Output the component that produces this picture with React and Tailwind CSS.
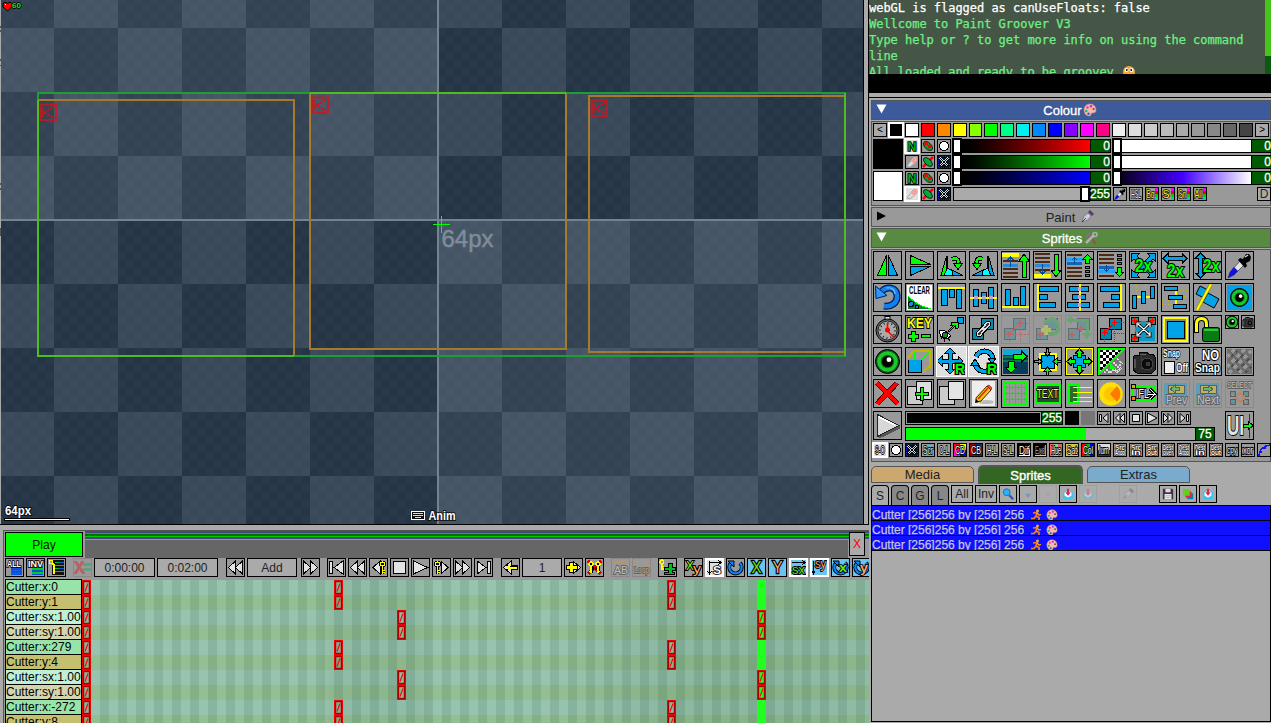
import React from "react";

const BLUE = "#00a2e8";
const GREEN = "#00ff00";
const K = "#000";

/* ---------- shared drawing helpers ---------- */

function T({ x, y, s = 8, w, c = "#fff", o = "#000", sw = 1.6, b = 700, children }) {
  return (
    <text
      x={x}
      y={y}
      fontSize={s}
      fontFamily="Liberation Sans, Arial, sans-serif"
      fontWeight={b}
      fill={c}
      stroke={o}
      strokeWidth={o === "none" ? 0 : sw}
      paintOrder="stroke"
      textLength={w}
      lengthAdjust="spacingAndGlyphs"
    >
      {children}
    </text>
  );
}

function B({ x, y, w, h, c = BLUE, s = K }) {
  return <rect x={x + 0.5} y={y + 0.5} width={w - 1} height={h - 1} fill={c} stroke={s} />;
}

function Arrow({ x, y, r = 0, k = 1, c = GREEN }) {
  return (
    <path
      d="M0 -5L4.5 0H1.8V5H-1.8V0H-4.5Z"
      transform={`translate(${x} ${y}) rotate(${r}) scale(${k})`}
      fill={c}
      stroke={K}
      strokeWidth={1 / k}
    />
  );
}

function Eye({ x = 14.5, y = 14.5, r = 12 }) {
  return (
    <g shapeRendering="auto">
      <circle cx={x} cy={y} r={r} fill="#0c5a14" stroke={K} />
      <circle cx={x} cy={y} r={r * 0.86} fill="#1cc82c" />
      <circle cx={x} cy={y} r={r * 0.56} fill="#0a6a14" />
      <circle cx={x} cy={y} r={r * 0.46} fill={K} />
      <circle cx={x + r * 0.12} cy={y - r * 0.15} r={r * 0.2} fill="#fff" />
    </g>
  );
}

function Lines({ x, w, ys, c = "#4d2b12" }) {
  return ys.map((y) => <rect key={y} x={x} y={y} width={w} height="2" fill={c} />);
}

function Cross({ x, y, c = "#f00" }) {
  return <path d={`M${x - 3} ${y}h6M${x} ${y - 3}v6`} stroke={c} strokeWidth="1.2" />;
}

function Camera({ k = 1 }) {
  return (
    <g transform={`scale(${k})`}>
      <path d="M4 10l2-2h4V5h7l3 2h4l2 3v13l-3 3H8l-4-3z" fill="#2a2a2c" stroke={K} />
      <circle cx="18" cy="17" r="6" fill="#0c0c0c" stroke="#444" />
      <circle cx="19" cy="17" r="2.500" fill="#3a3a3c" />
      <path d="M12.500 9v14" stroke="#8a1a1a" />
      <path d="M6 12v9" stroke="#555" strokeWidth="2" />
      <path d="M11 7h6" stroke="#666" />
    </g>
  );
}

function Dropper({ k = 1 }) {
  return (
    <g transform={`scale(${k})`} shapeRendering="auto">
      <path d="M3 27l2-6L15 10l4 4L9 24z" fill="#e4e4ee" stroke="#555" />
      <path d="M3 27l2-6 4-5 4 4-4 4z" fill="#1010e0" />
      <path d="M13 9l2-2 3 1 3-5h3l2 3-1 4-4 2 1 3-2 2z" fill={K} />
      <path d="M20 6l3-2" stroke="#ccc" strokeWidth="1.500" />
    </g>
  );
}

function Eraser() {
  return (
    <g shapeRendering="auto">
      <path d="M2 11l6-8h4v3l-7 6z" fill="#ddd" stroke="#aaa" />
      <path d="M6 6l3-4h3v3l-3 4z" fill="#f8a0a0" />
    </g>
  );
}

function Palette({ className }) {
  return (
    <svg viewBox="0 0 14 14" className={className}>
      <path d="M7 1C3 1 1 4 1 7s2 6 5 6c2 0 2-1 2-2s1-1 2-1c2 0 3-1 3-3 0-4-3-6-6-6z" fill="#f8b8a4" stroke="#c88" strokeWidth=".6" />
      <circle cx="8" cy="3.300" r="1.200" fill="#93f" />
      <circle cx="4.500" cy="4.500" r="1.200" fill="#f39" />
      <circle cx="3.300" cy="8" r="1.200" fill="#0b8" />
      <circle cx="5.500" cy="10.700" r="1.200" fill="#26c" />
      <circle cx="10.600" cy="6" r="1.100" fill="#556" />
    </svg>
  );
}

/* ---------- large tool icons (29 x 29) ---------- */

const twoX = (x, y) => (
  <T x={x} y={y} s={19} w={17} c={GREEN} sw={2.2}>
    2x
  </T>
);
const links = (
  <g>
    <B x={3} y={13} w={12} h={12} c="#0a86a8" />
    <B x={12} y={3} w={13} h={12} c="#0a86a8" />
  </g>
);

const toolRows = [
  [
    <g>
      <path d="M4.500 24.500L13.500 4.500V24.500Z" fill={GREEN} stroke={K} />
      <path d="M15.500 4.500L24.500 24.500H15.500Z" fill={BLUE} stroke={K} />
    </g>,
    <g>
      <path d="M5.500 4.500L25.500 13.500H5.500Z" fill={GREEN} stroke={K} />
      <path d="M5.500 24.500L25.500 15.500H5.500Z" fill={BLUE} stroke={K} />
    </g>,
    <g>
      <path d="M9.500 5L4 24.500H9.500Z" fill={GREEN} stroke={K} />
      <path d="M10 5v12l15 7.500H7L11 16z" fill="#0ff" stroke={K} />
      <path d="M15 19l11 5.500H16z" fill={BLUE} stroke={K} />
      <path d="M15 8c6-2 7 2 6 5" fill="none" stroke={K} strokeWidth="4.500" />
      <path d="M15 8c6-2 7 2 6 5" fill="none" stroke={GREEN} strokeWidth="2.500" />
      <path d="M16.500 12.500h9L21 18.500z" fill={GREEN} stroke={K} />
    </g>,
    <g>
      <path d="M19.500 5L25 24.500H19.500Z" fill={BLUE} stroke={K} />
      <path d="M19 5v12L4 24.500h18L18 16z" fill="#0ff" stroke={K} />
      <path d="M14 19L3 24.500h10z" fill={BLUE} stroke={K} />
      <path d="M14 8C8 6 7 10 8 13" fill="none" stroke={K} strokeWidth="4.500" />
      <path d="M14 8C8 6 7 10 8 13" fill="none" stroke={GREEN} strokeWidth="2.500" />
      <path d="M3.500 12.500h9L8 18.500z" fill={GREEN} stroke={K} />
    </g>,
    <g>
      <Lines x={2} w={15} ys={[9, 17, 21, 25]} />
      <rect x="1" y="2" width="17" height="4" fill="#ff0" />
      <rect x="2" y="13" width="15" height="3" fill="#2a8ad8" />
      <path d="M9.500 16V6M6.500 9L9.500 6L12.500 9" fill="none" stroke="#024a9a" strokeWidth="1.500" />
      <path d="M23 3l5 7h-3v16h-4V10h-3z" fill={GREEN} stroke={K} />
    </g>,
    <g>
      <Lines x={2} w={15} ys={[2, 6, 10, 18]} />
      <rect x="1" y="23" width="17" height="4" fill="#ff0" />
      <rect x="2" y="13" width="15" height="3" fill="#2a8ad8" />
      <path d="M9.500 13v10M6.500 20l3 3l3-3" fill="none" stroke="#024a9a" strokeWidth="1.500" />
      <path d="M23 26l5-7h-3V3h-4v16h-3z" fill={GREEN} stroke={K} />
    </g>,
    <g>
      <Lines x={2} w={15} ys={[3, 16, 20, 24]} />
      <rect x="1" y="7" width="18" height="3" fill="#2aa0f0" />
      <rect x="2" y="11" width="15" height="3" fill="#1464b8" />
      <path d="M9.500 13V7M7 9L9.500 7L12 9" fill="none" stroke="#024a9a" />
      <Arrow x={22.5} y={8} k={0.95} />
      <path d="M20.500 15.500h4v2h-4zM20.500 19.500h4v2h-4zM20.500 23.500h4v2h-4z" fill="#0c0" stroke={K} />
    </g>,
    <g>
      <Lines x={2} w={15} ys={[3, 7, 11, 24]} />
      <rect x="1" y="19" width="18" height="3" fill="#2aa0f0" />
      <rect x="2" y="15" width="15" height="3" fill="#1464b8" />
      <path d="M9.500 14v6M7 18l2.500 2l2.500-2" fill="none" stroke="#024a9a" />
      <Arrow x={22.5} y={21} r={180} k={0.95} />
      <path d="M20.500 3.500h4v2h-4zM20.500 7.500h4v2h-4zM20.500 11.500h4v2h-4z" fill="#0c0" stroke={K} />
    </g>,
    <g>
      <path d="M6 6L23 23M23 6L6 23" stroke={K} strokeWidth="5" />
      <path d="M2.500 2.500h8l-8 8zM26.500 2.500h-8l8 8zM2.500 26.500h8l-8-8zM26.500 26.500h-8l8-8z" fill={BLUE} stroke={K} />
      <path d="M6 6L23 23M23 6L6 23" stroke={BLUE} strokeWidth="3" />
      {twoX(6, 21)}
    </g>,
    <g>
      <path d="M2 7.500l5-5v3h14v-3l5 5l-5 5v-3H7v3z" fill={BLUE} stroke={K} />
      {twoX(6, 26)}
    </g>,
    <g>
      <path d="M7.500 2l5 5h-3v15h3l-5 5l-5-5h3V7h-3z" fill={BLUE} stroke={K} />
      {twoX(10, 21)}
    </g>,
    <Dropper />,
  ],
  [
    <g shapeRendering="auto">
      <path d="M9 8c5-5 14-4 15 4s-6 12-13 11" fill="none" stroke="#01205a" strokeWidth="7" />
      <path d="M9 8c5-5 14-4 15 4s-6 12-13 11" fill="none" stroke="#1580e8" strokeWidth="4.500" />
      <path d="M2.500 3L3 15.500L14 12.500Z" fill="#2a98ff" stroke="#01205a" />
      <path d="M13 5c5-1 9 1 9 6" fill="none" stroke="#6cc0ff" strokeWidth="1.200" />
    </g>,
    <g>
      <rect x="2" y="2" width="25" height="25" fill="#fff" />
      <path d="M3 13C10 20 15 23 26 26H3z" fill="#087a3a" />
      <path d="M3 13C10 20 15 23 26 26" fill="none" stroke={GREEN} />
      <circle cx="6" cy="21" r="2.500" fill="#1a86d8" stroke={K} /><circle cx="12" cy="24" r="2" fill="#1a86d8" stroke={K} />
      <T x={4} y={11} s={10} w={21} c="#000" o="none">CLEAR</T>
    </g>,
    <g>
      <B x={4} y={6} w={7} h={17} /><B x={12} y={6} w={6} h={9} /><B x={19} y={6} w={6} h={20} />
      <rect x="1" y="4" width="27" height="2" fill="#ff0" />
    </g>,
    <g>
      <B x={4} y={6} w={6} h={18} /><B x={12} y={9} w={6} h={12} /><B x={19} y={4} w={6} h={22} />
      <rect x="1" y="14" width="27" height="2" fill="#ff0" /><path d="M5 14.500h4M13 14.500h4M20 14.500h4" stroke="#c4a0d0" strokeWidth="3" />
    </g>,
    <g>
      <B x={4} y={6} w={6} h={17} /><B x={12} y={14} w={6} h={9} /><B x={19} y={3} w={6} h={20} />
      <rect x="1" y="23" width="27" height="2" fill="#ff0" />
    </g>,
    <g>
      <B x={6} y={3} w={20} h={6} /><B x={6} y={11} w={9} h={6} /><B x={6} y={19} w={17} h={6} />
      <rect x="4" y="1" width="2" height="27" fill="#ff0" />
    </g>,
    <g>
      <B x={4} y={3} w={20} h={6} /><B x={7} y={11} w={14} h={6} /><B x={2} y={19} w={23} h={6} />
      <path d="M14.500 1v27" stroke="#ff0" strokeWidth="2" /><path d="M14.500 4v4M14.500 12v4M14.500 20v4" stroke="#c4a0d0" strokeWidth="3" />
    </g>,
    <g>
      <B x={3} y={3} w={20} h={6} /><B x={14} y={11} w={9} h={6} /><B x={6} y={19} w={17} h={6} />
      <rect x="23" y="1" width="2" height="27" fill="#ff0" />
    </g>,
    <g>
      <path d="M7.500 1v10M16.500 1v6M20.500 18v9" stroke="#c8b800" strokeDasharray="1 2" />
      <rect x="4" y="13" width="18" height="2" fill="#ff0" />
      <B x={3} y={12} w={5} h={14} /><B x={12} y={8} w={5} h={13} /><B x={21} y={3} w={5} h={13} />
    </g>,
    <g>
      <path d="M16 7.500h11M1 17.500h8M1 21.500h10M20 13.500h8" stroke="#c8b800" strokeDasharray="1 2" />
      <rect x="14" y="4" width="2" height="18" fill="#ff0" />
      <B x={3} y={3} w={14} h={5} /><B x={7} y={12} w={15} h={5} /><B x={12} y={21} w={14} h={5} />
    </g>,
    <g shapeRendering="auto">
      <path d="M7 3l8 4-4 8-8-4zM15 10l11 6-5 9-11-6z" fill={BLUE} stroke={K} />
      <path d="M4 27L18 1" stroke="#a09000" strokeWidth="3.500" />
      <path d="M4 27L18 1" stroke="#ff0" strokeWidth="2" />
    </g>,
    <g>
      <rect x="2" y="2" width="25" height="25" fill={BLUE} />
      <Eye r={9} />
    </g>,
  ],
  [
    <g shapeRendering="auto">
      <rect x="12" y="1.500" width="5" height="4" fill="#ddd" stroke={K} />
      <circle cx="14.500" cy="15.500" r="11.500" fill="#666" stroke={K} />
      <circle cx="14.500" cy="15.500" r="9.500" fill="#aaa" stroke="#222" />
      <circle cx="14.500" cy="15.500" r="7.500" fill="none" stroke="#222" strokeDasharray="1 2.900" strokeWidth="2" />
      <path d="M14.500 8v8l7 7" fill="none" stroke="#f00" strokeWidth="1.600" />
      <circle cx="14.500" cy="15" r="2.500" fill="#f00" />
    </g>,
    <g>
      <T x={2} y={13} s={15.5} w={25} c="#ff0" sw={2}>KEY</T>
      <path d="M3.500 19.500h3v-3h4v3h3v4h-3v3h-4v-3h-3zM16.500 19.500h9v3h-9z" fill={GREEN} stroke={K} />
    </g>,
    <g>
      <B x={20} y={2} w={7} h={7} />
      <path d="M11 16l6-6h-3l1-3h6v6l-3 1v-3l-6 6z" fill={GREEN} stroke={K} />
      <path d="M2 16c2 9 7 9 12 5-2-3-7-7-12-5z" fill="#fff" stroke={K} /><circle cx="8" cy="20" r="2.800" fill="#1a8a2a" stroke={K} />
      <path d="M2 17l3 7M7 24v3M11 23l2 3" stroke={K} />
    </g>,
    <g>
      {links}
      <path d="M10 19l9-10" stroke={K} strokeWidth="6.500" strokeLinecap="round" />
      <path d="M10 19l9-10" stroke="#ddd" strokeWidth="4.500" strokeLinecap="round" />
      <path d="M10 19l3-3.500M16 12.500l3-3.500" stroke="#333" strokeWidth="1.800" strokeLinecap="round" />
    </g>,
    <g opacity=".3">
      {links}
      <path d="M8 27V19L19 8H28M19 8V27M8 19H28" fill="none" stroke="#f00" strokeDasharray="2 1" />
      <Cross x={8} y={19} /><Cross x={19} y={8} />
    </g>,
    <g opacity=".3">
      {links}
      <path d="M12 9c2-7 13-6 13 2M25 12c1 8-10 9-12 3" fill="none" stroke="#0b2" strokeWidth="4" />
      <path d="M8 15h10M13 10v10" stroke="#ff0" strokeWidth="4" />
      <Cross x={7} y={20} />
    </g>,
    <g opacity=".3">
      {links}
      <path d="M4 5h18v16M7 2L4 5l3 3M19 18l3 4 3-4" fill="none" stroke="#0b2" strokeWidth="3" />
      <Cross x={7} y={20} /><Cross x={16} y={14} />
    </g>,
    <g>
      {links}
      <path d="M17.500 8V28M7.500 18H28M18 7.500h10M7.500 18V28" fill="none" stroke="#f00" strokeDasharray="1 1" />
      <path d="M7 18L18 8" stroke="#f00" />
      <Cross x={7.5} y={17.5} /><Cross x={17.5} y={7.5} />
    </g>,
    <g shapeRendering="auto">
      <rect x="6" y="6" width="20" height="20" fill="#0a9ac8" />
      <B x={2} y={2} w={8} h={8} c="#0a9a78" /><B x={19} y={2} w={8} h={8} c="#0a9a78" /><B x={2} y={19} w={8} h={8} c="#0a9a78" />
      <path d="M9 9l12 11M20 9L9 20M8 12V8h4M17 8h4v4M8 17v4h4M21 17v4h-4" fill="none" stroke={K} strokeWidth="3" />
      <path d="M9 9l12 11M20 9L9 20M8 12V8h4M17 8h4v4M8 17v4h4M21 17v4h-4" fill="none" stroke="#fff" strokeWidth="1.200" />
      <Cross x={5.5} y={5.5} /><Cross x={23.5} y={5.5} /><Cross x={5.5} y={23.5} />
    </g>,
    <g>
      <rect x="3" y="3" width="23" height="23" fill="#888" stroke="#ff0" strokeWidth="2" />
      <B x={6} y={6} w={18} h={18} />
    </g>,
    <g shapeRendering="auto">
      <path d="M3.500 18V9q0-5.500 5-5.500t5 5.500v4" fill="none" stroke={K} strokeWidth="5" />
      <path d="M3.500 17V9q0-5.500 5-5.500t5 5.500v4" fill="none" stroke="#ff0" strokeWidth="3" />
      <rect x="9.500" y="12.500" width="17" height="14" rx="2" fill="#0a7a14" stroke={K} />
      <path d="M11 15h14" stroke="#2cc838" strokeWidth="2" />
    </g>,
  ],
  [
    <Eye />,
    <g>
      <path d="M3 11l6-7h16v15l-7 6" fill="none" stroke="#c8b400" strokeWidth="2" />
      <path d="M9 4v12h16M3 26l6-10" fill="none" stroke={GREEN} />
      <B x={3} y={12} w={14} h={14} />
      <path d="M3 12h14l7-7" fill="none" stroke={GREEN} />
    </g>,
    <g>
      <path d="M13 1l5 5h-3v6h6V9l5 5-5 5v-3h-6v6h3l-5 5-5-5h3v-6H5v3l-5-5 5-5v3h6V6H8z" fill={BLUE} stroke={K} />
      <T x={18} y={27} s={15} w={10} c={GREEN} sw={3}>R</T>
    </g>,
    <g>
      <path d="M7 10c3-8 15-8 17 2M23 19c-3 8-14 7-17-2" fill="none" stroke={K} strokeWidth="5.500" />
      <path d="M7 10c3-8 15-8 17 2M23 19c-3 8-14 7-17-2" fill="none" stroke={BLUE} strokeWidth="3.500" />
      <path d="M19 11h8l-4 6zM2 18h8l-4-6z" fill={BLUE} stroke={K} />
      <T x={18} y={27} s={15} w={10} c={GREEN} sw={3}>R</T>
    </g>,
    <g>
      <rect x="2" y="2" width="25" height="25" fill="#063c58" />
      <rect x="2" y="2" width="25" height="6" fill="#12a8d8" />
      <path d="M2 10h25M2 14h25" stroke="#0a7a4a" strokeWidth="2" />
      <path d="M12 7h8V3.500l6 6-6 6V12h-8zM7 14h6v6h3l-6 6-6-6h3z" fill={GREEN} stroke={K} />
    </g>,
    <g>
      <rect x="6.500" y="6.500" width="16" height="16" fill="none" stroke="#ff0" strokeWidth="2" />
      <B x={8} y={8} w={14} h={14} />
      <Arrow x={14.5} y={5} r={180} k={0.8} /><Arrow x={14.5} y={24} k={0.8} />
      <Arrow x={5} y={14.5} r={90} k={0.8} /><Arrow x={24} y={14.5} r={270} k={0.8} />
    </g>,
    <g>
      <rect x="1" y="1" width="27" height="27" fill="none" stroke="#ff0" strokeWidth="2" />
      <B x={8} y={8} w={13} h={13} />
      <Arrow x={14.5} y={6} k={0.85} /><Arrow x={14.5} y={23} r={180} k={0.85} />
      <Arrow x={6} y={14.5} r={270} k={0.85} /><Arrow x={23} y={14.5} r={90} k={0.85} />
    </g>,
    <g>
      <rect x="1" y="1" width="27" height="27" fill="#555" />
      <path d="M1 28L28 1v27z" fill="#777" />
      <path d="M2 2h24L2 26z" fill="#fff" />
      <path d="M4.500 2v22M10.500 2v16M16.500 2v10M22.500 2v4" stroke={K} strokeWidth="3" strokeDasharray="3 3" />
      <path d="M7.500 5v16M13.500 5v10M19.500 5v4" stroke={K} strokeWidth="3" strokeDasharray="3 3" />
      <path d="M1 28L28 1M2 28V2H28" fill="none" stroke={GREEN} strokeWidth="2.500" />
      <path d="M7 26l3-3 3 3 4-4 3 3 4-4M14 19l3-3 4 4 4-4M20 12l4 3" fill="none" stroke="#ddd" strokeWidth="1.500" strokeDasharray="2 1" />
      <path d="M13 16l7 6h-7z" fill={GREEN} />
    </g>,
    <Camera />,
    <g>
      <T x={2} y={10} s={10} w={17}>Snap</T>
      <rect x="3.500" y="14.500" width="10" height="12" fill="#eee" stroke={K} />
      <T x={15} y={25} s={12} w={12}>Off</T>
    </g>,
    <g>
      <T x={9} y={13} s={15} w={17} sw={2.2}>NO</T>
      <T x={2} y={25} s={13} w={25} sw={2.2}>Snap</T>
    </g>,
    <g>
      <rect x="2" y="2" width="25" height="25" fill="#6e6e6e" />
      <path d="M2 10L10 2M2 20L20 2M4 26L26 4M14 26L26 14" stroke="#969696" strokeWidth="3" strokeDasharray="4 3" />
      <path d="M6 10L12 4M6 20L20 6M12 24L26 10M20 26l6-6" stroke="#4e4e4e" strokeWidth="2" strokeDasharray="3 4" />
    </g>,
  ],
  [
    <g>
      <path d="M4 4l21 21M24 4L4 25" stroke="#500" strokeWidth="5.500" />
      <path d="M4 4l21 21M24 4L4 25" stroke="#f00" strokeWidth="3.800" />
    </g>,
    <g>
      <rect x="2.500" y="7.500" width="15" height="18" fill="#ccc" stroke={K} />
      <rect x="11.500" y="2.500" width="15" height="18" fill="#ddd" stroke={K} />
      <path d="M15.500 8.500h3v5h5v3h-5v5h-3v-5h-5v-3h5z" fill={GREEN} stroke={K} />
    </g>,
    <g>
      <rect x="2.500" y="7.500" width="15" height="18" fill="#ccc" stroke={K} />
      <rect x="11.500" y="2.500" width="15" height="18" fill="#e4e4e4" stroke={K} />
    </g>,
    <g shapeRendering="auto">
      <rect x="3" y="2" width="23" height="25" fill="#eee" />
      <ellipse cx="17" cy="23" rx="8" ry="2" fill="#bbb" />
      <path d="M7 19L18 7l4 4L12 22l-5 1z" fill="#f8c800" stroke="#420" />
      <path d="M9 20L19 9" stroke="#d22" strokeWidth="1.600" />
      <path d="M18 7l2-1 3 3-1 2z" fill="#f44" stroke="#420" strokeWidth=".6" /><path d="M6 24l1-4 3 3z" fill={K} />
    </g>,
    <g>
      <rect x="3.500" y="3.500" width="22" height="22" fill="none" stroke={GREEN} />
      <g fill="none" stroke="#00d800" strokeOpacity=".65">
        <path d="M8.500 4v21M14.500 4v21M20.500 4v21M4 8.500h21M4 14.500h21M4 20.500h21" />
        <path d="M5.500 4v21M11.500 4v21M17.500 4v21M23.500 4v21" strokeDasharray="1 2" />
      </g>
    </g>,
    <g>
      <rect x="2.500" y="5.500" width="24" height="18" fill="#2a4a2a" stroke={GREEN} strokeWidth="2" />
      <T x={3.5} y={19} s={12.5} w={22} c="#ff0" sw={1.6} b={400}>TEXT</T>
    </g>,
    <g>
      <rect x="4" y="6" width="9" height="18" fill="#2a6a2a" stroke={GREEN} strokeWidth="2.500" />
      <path d="M8 8.500h19M8 13.500h19M8 18.500h19M8 22.500h19" stroke="#ff0" />
    </g>,
    <g shapeRendering="auto">
      <circle cx="14" cy="15" r="11.800" fill="#ffe000" />
      <circle cx="14" cy="15" r="7" fill="#ffc400" />
      <path d="M13 15l7-8q7 8 0 16z" fill="#ff7a00" />
    </g>,
    <g>
      <path d="M4 8h21v13H4z" fill="none" stroke={GREEN} strokeWidth="2" />
      <B x={2} y={5} w={5} h={5} c="#c8b400" /><B x={2} y={17} w={5} h={5} c="#f70" />
      <T x={7} y={19} s={13} w={13} b={400} sw={2}>IFL</T>
      <path d="M21 10l5 5-5 5M19 15h8" fill="none" stroke={K} strokeWidth="3" /><path d="M21 10l5 5-5 5M19 15h8" fill="none" stroke="#fff" />
    </g>,
    <g opacity=".38">
      <rect x="3" y="4" width="23" height="21" fill={BLUE} />
      <rect x="7" y="6" width="16" height="8" fill="#fd0" stroke={K} />
      <Arrow x={14} y={10} r={270} k={0.9} />
      <T x={5} y={25} s={12} w={21} b={400} sw={2}>Prev</T>
    </g>,
    <g opacity=".38">
      <rect x="3" y="4" width="23" height="21" fill={BLUE} />
      <rect x="7" y="6" width="16" height="8" fill="#fd0" stroke={K} />
      <Arrow x={15} y={10} r={90} k={0.9} />
      <T x={4} y={25} s={12} w={22} b={400} sw={2}>Next</T>
    </g>,
    <g opacity=".38">
      <T x={2} y={9} s={9.5} w={25} b={400} sw={2}>SELECT</T>
      <B x={5} y={12} w={6} h={6} c="#0a8a98" /><B x={18} y={12} w={6} h={6} c="#0a8a98" />
      <B x={5} y={20} w={6} h={6} c="#0a8a98" /><B x={18} y={20} w={6} h={6} c="#0a8a98" />
      <path d="M11 19l4-5 5 5-5 4zM7 15l2 2M20 22l2 2" fill="none" stroke="#f60" strokeWidth="2" />
    </g>,
  ],
];

function Tool({ on, off, children }) {
  const box = on ? "h-[31px] w-[31px] -m-px bg-white p-px" : off ? "h-[29px] w-[29px] border border-[#8a8a8a]" : "h-[29px] w-[29px] border border-black";
  return (
    <div className={`shrink-0 ${box}`}>
      <svg viewBox="1 1 27 27" shapeRendering="crispEdges" className={on ? "block h-[29px] w-[29px] bg-[#e0e0e0] p-px" : "block h-[27px] w-[27px]"}>
        {children}
      </svg>
    </div>
  );
}

function Mini({ on, bg = "bg-[#999]", children }) {
  return (
    <div className={`h-[14px] w-[14px] shrink-0 ${on ? "bg-[#e0e0e0] outline-2 -outline-offset-1 outline-white" : bg + " border border-black"}`}>
      <svg viewBox="1 1 12 12" shapeRendering="crispEdges" className={on ? "block h-[14px] w-[14px] p-px" : "block h-3 w-3"}>
        {children}
      </svg>
    </div>
  );
}

/* ---------- transport shapes (19 x 19) ---------- */

const F = { fill: "#e4e4e4", stroke: K, strokeWidth: 1 };
const shapes = {
  rew: <path d="M9.500 3v13l-7-6.500zM16.500 3v13l-7-6.500z" {...F} />,
  ff: <path d="M2.500 3v13l7-6.500zM9.500 3v13l7-6.500z" {...F} />,
  start: <g><path d="M2.500 3.500h3v12h-3z" {...F} /><path d="M16 3v13l-9-6.500z" {...F} /></g>,
  end: <g><path d="M13.500 3.500h3v12h-3z" {...F} /><path d="M3 3v13l9-6.500z" {...F} /></g>,
  stop: <path d="M3.500 3.500h12v12h-12z" {...F} />,
  play: <path d="M2.500 3v13l14-6.500z" {...F} />,
  keyL: <g><path d="M11 3v13L4 9.500z" {...F} /><path d="M13.500 7v9M14 13.500h2" stroke={K} strokeWidth="3" /><circle cx="13.500" cy="6" r="2" fill="none" stroke={K} strokeWidth="3" /><circle cx="13.500" cy="6" r="2" fill="none" stroke="#ff0" strokeWidth="1.200" /><path d="M13.500 8v8M13.500 12.500h2M13.500 14.500h2" stroke="#ff0" /></g>,
  keyR: <g><path d="M9 3v13l7-6.500z" {...F} /><path d="M5.500 7v9M6 13.500h2" stroke={K} strokeWidth="3" /><circle cx="5.500" cy="6" r="2" fill="none" stroke={K} strokeWidth="3" /><circle cx="5.500" cy="6" r="2" fill="none" stroke="#ff0" strokeWidth="1.200" /><path d="M5.500 8v8M5.500 12.500h2M5.500 14.500h2" stroke="#ff0" /></g>,
  prev: <g><path d="M10 3v13L2.500 9.500z" {...F} /><path d="M6 9.500h11" stroke={K} strokeWidth="4.500" /><path d="M6 9.500h10M9.500 6.500l-3 3 3 3" fill="none" stroke="#ff0" strokeWidth="2" /></g>,
  next: <g><path d="M9 3v13l7.500-6.500z" {...F} /><path d="M2 9.500h12M7.500 4v11" stroke={K} strokeWidth="5" /><path d="M3 9.500h10M7.500 5v9" stroke="#ff0" strokeWidth="3" /></g>,
  keyDel: <g><path d="M3 3l13 13M16 3L3 16" stroke="#e00000" strokeWidth="3.500" /><path d="M6 5v10M13 5v10M6 10h3M13 10h-3" stroke={K} strokeWidth="3" /><circle cx="6" cy="6" r="2" fill="none" stroke="#ff0" strokeWidth="1.500" /><circle cx="13" cy="6" r="2" fill="none" stroke="#ff0" strokeWidth="1.500" /><path d="M6 8v7M13 8v7M4 13.500h2M13 13.500h2" stroke="#ff0" strokeWidth="1.500" /></g>,
  all: <g><rect x="6" y="8" width="11" height="9" fill="#0a50d8" /><path d="M6 9h11M6 12h11M6 15h11" stroke="#0f6ef8" strokeDasharray="1 1" /><T x={2} y={8.5} s={8.5} w={14}>ALL</T></g>,
  inv: <g><rect x="6" y="8" width="11" height="9" fill="#0a50d8" /><path d="M6 11h11M6 15h11" stroke="#0c2" strokeWidth="2" /><T x={2} y={8.5} s={8.5} w={15}>INV</T></g>,
  keys: <g><rect x="5" y="2" width="12" height="15" fill="#111" /><path d="M8 4.500h9M8 7.500h9M8 10.500h9M8 13.500h9" stroke="#0b4" /><path d="M12 4.500h5M12 10.500h5" stroke="#06c" /><circle cx="4" cy="4" r="2" fill="none" stroke="#ff0" /><path d="M5 5l2 2v9" fill="none" stroke="#ff0" strokeWidth="1.500" /></g>,
  del: <g opacity=".35"><path d="M2 3l9 13M10 3L2 16" stroke="#e00" strokeWidth="3" /><path d="M10 6.500h8M10 11.500h8" stroke="#0a5" strokeWidth="3" /></g>,
  ab: <g opacity=".35"><path d="M2 4.500h15M2.500 2v5M16.500 2v5" stroke="#f80" strokeWidth="1.500" /><T x={3} y={16} s={11} w={14} b={400} sw={2}>AB</T></g>,
  loop: <g opacity=".35"><path d="M2 8V3.500h14M14 1l3 2.500-3 2.500" fill="none" stroke="#f80" strokeWidth="1.500" strokeDasharray="2 1" /><T x={2} y={15} s={9} w={15} c="#fb5" b={400} sw={2}>Loop</T></g>,
  keyAdd: <g><path d="M6.500 9.500h4v-4h4v4h3v3h-3v2h2v2h-10v-2h4v-2h-4z" fill="#0b2" stroke={K} /><circle cx="4" cy="4" r="2" fill="none" stroke="#ff0" strokeWidth="1.200" /><path d="M4 6v6M4 8.500h2M4 11h2" stroke="#ff0" strokeWidth="1.200" /></g>,
  xy: <g><T x={2} y={12} s={13} w={8} c="#8f0" b={400} sw={2}>X</T><T x={9} y={14.5} s={13} w={8} c="#fca46a" b={400} sw={2}>y</T></g>,
  s: <g><path d="M4.500 3v13M4.500 4.500h11M13 2l3 2.500-3 2.500M2.500 13l2 3 2-3" fill="none" stroke={K} /><T x={8} y={16} s={11} w={8} c="#fff">S</T></g>,
  rot: <g shapeRendering="auto"><path d="M5 5a6.200 6.200 0 1 0 9 0" fill="none" stroke={K} strokeWidth="4" /><path d="M5 5a6.200 6.200 0 1 0 9 0" fill="none" stroke="#0a84ff" strokeWidth="2.200" /><path d="M2 3h6v6z" fill="#0a84ff" stroke={K} /></g>,
  x: <T x={4.5} y={15} s={16} w={10} c="#6e0" b={400} sw={2.4}>X</T>,
  y: <T x={4.5} y={15} s={16} w={10} c="#fca46a" b={400} sw={2.4}>Y</T>,
  sx: <g><path d="M3 4.500h12M13 2l3 2.500-3 2.500" fill="none" stroke={K} /><T x={3} y={16} s={12} w={13} c="#6e0" b={400} sw={1.8}>sx</T></g>,
  sy: <g><path d="M3.500 3v13M2 13l1.500 3L5 13" fill="none" stroke={K} /><T x={5} y={10} s={12} w={11} c="#fca46a" b={400} sw={1.8}>sy</T></g>,
};
shapes.rx = <g>{shapes.rot}<T x={8} y={14} s={12} w={8} c="#6e0">x</T></g>;
shapes.ry = <g>{shapes.rot}<T x={8} y={14} s={12} w={8} c="#fca46a">y</T></g>;

function TBtn({ k, on, blue, off, gap = "" }) {
  const bg = blue ? "bg-[#6cc4ee]" : on ? "bg-[#e0e0e0]" : "bg-[#999]";
  const bd = on ? "border-2 border-white" : off ? "border border-[#888]" : "border border-black";
  return (
    <div className={`h-[19px] w-[19px] shrink-0 ${bg} ${bd} ${gap}`}>
      <svg viewBox={on ? "2 2 15 15" : "1 1 17 17"} className={on ? "block h-[15px] w-[15px]" : "block h-[17px] w-[17px]"} shapeRendering="crispEdges">
        {shapes[k]}
      </svg>
    </div>
  );
}

/* ---------- canvas ---------- */

function KeyMark({ x, y }) {
  return (
    <g transform={`translate(${x} ${y})`} fill="none" stroke="#d81018" strokeOpacity=".75">
      <rect x="1" y="1" width="15.500" height="15.500" strokeWidth="2" />
      <path d="M3 3v11" strokeWidth="2.500" />
      <path d="M15 2.500L5 9l10 5.500" strokeWidth="1.300" stroke="#e00c14" strokeOpacity="1" />
    </g>
  );
}

function Stage() {
  return (
    <svg width="863" height="524" viewBox="0 0 863 524" className="block" fontFamily="Liberation Sans, Arial, sans-serif">
      <defs>
        <pattern id="small" width="16" height="16" x="6" y="12" patternUnits="userSpaceOnUse">
          <rect width="16" height="16" fill="#253546" />
          <path d="M0 0h8v8H0zM8 8h8v8H8z" fill="#28394a" />
        </pattern>
        <pattern id="big" width="128" height="128" x="54" y="28" patternUnits="userSpaceOnUse">
          <path d="M64 0h64v64H64zM0 64h64v64H0z" fill="#f0f8ff" fillOpacity=".1" />
        </pattern>
      </defs>
      <rect width="863" height="524" fill="url(#small)" />
      <rect width="863" height="524" fill="url(#big)" />
      <path d="M0 0h438v220H0zM438 220h425v304H438z" fill="#f0f8ff" fillOpacity=".075" />
      <rect width="1" height="524" fill="#aaa" />
      <path d="M0 26h1v2H0zM0 30h1v2H0zM0 59h1v2H0zM0 65h1v1H0zM0 183h1v2H0zM0 188h1v2H0zM0 228h1v8H0z" fill="#555" />
      <path d="M438 0v524M1 220h862" stroke="#738392" strokeWidth="2" />
      <g fill="none" strokeWidth="2">
        <path d="M38 93H845V356H38Z" stroke="#1b9e32" />
        <path d="M38 100H294V356M310 93V349H566V93M845 96H589V352H845" stroke="#a8782c" />
        <path d="M38 100V356H294M310 93H566M845 93V356" stroke="#4fbe1a" />
      </g>
      <KeyMark x={39.5} y={103.5} />
      <KeyMark x={311.5} y={96.5} />
      <KeyMark x={590.5} y={99.5} />
      <path d="M433 224.500h17M441.500 216v17" stroke={GREEN} />
      <text x="441.500" y="247" fontSize="24" fill="#7f8c99" stroke="#7f8c99" strokeWidth=".5">64px</text>
      <path d="M4 2.500h2l1.500 1 1.500-1h2l1 1v3L7.500 11 3 7V4z" fill="#f00" stroke={K} />
      <path d="M5 4h1v1H5z" fill="#fff" />
      <T x={12} y={8} s={8} w={9} c={GREEN}>60</T>
      <g fontSize="12" fontWeight="700" fill="#fff" stroke={K} strokeWidth="2" strokeOpacity=".7" paintOrder="stroke">
        <text x="5" y="515" textLength="26" lengthAdjust="spacingAndGlyphs">64px</text>
        <text x="428.500" y="520" textLength="27" lengthAdjust="spacingAndGlyphs">Anim</text>
      </g>
      <rect x="4.500" y="518.500" width="65" height="2" fill="#fff" stroke={K} strokeWidth="1" />
      <rect x="411.500" y="511.500" width="13" height="8" fill="#111" stroke="#fff" />
      <path d="M413 513.500h10M413 515.500h10M415 517.500h6" stroke="#ddd" />
    </svg>
  );
}

/* ---------- timeline ---------- */

const tracks = [
  ["Cutter:x:0", "bg-[#98e4a8]"],
  ["Cutter:y:1", "bg-[#c4c070]"],
  ["Cutter:sx:1.00", "bg-[#c0f0d4]"],
  ["Cutter:sy:1.00", "bg-[#d2d6b0]"],
  ["Cutter:x:279", "bg-[#98e4a8]"],
  ["Cutter:y:4", "bg-[#c4c070]"],
  ["Cutter:sx:1.00", "bg-[#c0f0d4]"],
  ["Cutter:sy:1.00", "bg-[#d2d6b0]"],
  ["Cutter:x:-272", "bg-[#98e4a8]"],
  ["Cutter:y:8", "bg-[#c4c070]"],
];

function KeyFrame({ frame }) {
  return (
    <svg width="9" height="15" viewBox="0 0 9 15" className="absolute top-0" style={{ left: frame * 9 }}>
      <rect x=".5" y=".5" width="8" height="14" fill="none" stroke="#f00000" />
      <rect x="1.600" y="1.600" width="5.800" height="11.800" fill="none" stroke="#a80000" strokeWidth="1.200" />
      <path d="M3 11.500L6 3.500" stroke="#f00" strokeWidth="1.100" />
    </svg>
  );
}

function Field({ w, children }) {
  return <div className={`flex h-[19px] shrink-0 items-center justify-center border border-black bg-[#aaa] text-[#222] ${w}`}>{children}</div>;
}

function Timeline() {
  return (
    <div className="ml-[3px] mt-[5px] flex h-[193px] w-[866px] flex-col border-l border-t border-[#555] bg-[#999] pl-px pt-px text-[12px] leading-none">
      <div className="flex h-[26px]">
        <div className="flex h-[25px] w-[78px] items-center justify-center border border-black bg-[#00ff00] text-[#111]">Play</div>
        <div className="relative -mt-px ml-[2px] flex w-[784px] flex-col">
          <div className="h-[8px] border-y-2 border-[#444a80] bg-[#007a00]">
            <div className="h-1 border-y border-[#00c800] bg-[#007000]" />
          </div>
          <div className="mt-px h-[18px] w-[763px] bg-[#666]" />
          <div className="absolute left-[764px] top-px flex h-[24px] w-[16px] items-center justify-center border border-black bg-[#aaa] text-[#f00]">X</div>
        </div>
      </div>
      <div className="flex h-[22px] gap-[2px] overflow-hidden">
        <TBtn k="all" /><TBtn k="inv" /><TBtn k="keys" />
        <TBtn k="del" off gap="ml-[5px]" />
        <Field w="w-[61px]">0:00:00</Field>
        <Field w="w-[61px]">0:02:00</Field>
        <TBtn k="rew" gap="ml-[6px]" />
        <Field w="w-[50px]">Add</Field>
        <TBtn k="ff" gap="ml-[2px]" />
        <TBtn k="start" gap="ml-[5px]" /><TBtn k="rew" /><TBtn k="keyL" /><TBtn k="stop" /><TBtn k="play" /><TBtn k="keyR" /><TBtn k="ff" /><TBtn k="end" />
        <TBtn k="prev" gap="ml-[6px]" />
        <Field w="w-[40px]">1</Field>
        <TBtn k="next" /><TBtn k="keyDel" />
        <TBtn k="ab" off gap="ml-[5px]" /><TBtn k="loop" off />
        <TBtn k="keyAdd" gap="ml-[5px]" />
        <TBtn k="xy" gap="ml-[5px]" /><TBtn k="s" on /><TBtn k="rot" />
        <TBtn k="x" blue /><TBtn k="y" blue /><TBtn k="sx" blue on /><TBtn k="sy" blue on /><TBtn k="rx" blue /><TBtn k="ry" blue />
      </div>
      <div className="relative -mt-px flex min-h-0 flex-1 overflow-hidden">
        <div className="w-[77px] shrink-0 border-t border-black">
          {tracks.map(([label, bg], i) => (
            <div key={i} className={`h-[15px] overflow-hidden whitespace-nowrap border-x border-b border-black leading-[14px] text-black ${bg}`}>{label}</div>
          ))}
        </div>
        <div className="mt-px flex-1">
          {tracks.map((_, i) => (
            <div key={i} className={`relative h-[15px] ${i % 2 ? "bg-[#97c196]" : "bg-[#9bc7b1]"}`}>
              <div className="h-full bg-[linear-gradient(90deg,transparent_0_30%,rgba(0,40,20,.05)_32%_43%,transparent_45%_60%,rgba(0,40,20,.08)_74%_88%,rgba(0,40,20,.05)_100%)]">
                <div className="h-full bg-[repeating-linear-gradient(90deg,rgba(0,50,30,.12)_0_9px,rgba(0,50,30,.02)_9px_18px)]" />
              </div>
              <div className="absolute left-[675px] top-0 h-full w-[9px] bg-[#20ff20]" />
              {(i % 4 < 2 ? [0, 28, 65] : [0, 35, 75]).map((f) => <KeyFrame key={f} frame={f} />)}
            </div>
          ))}
        </div>
      </div>
    </div>
  );
}

/* ---------- colour panel ---------- */

const swatches = [
  "bg-white", "bg-[#f00]", "bg-[#ff8800]", "bg-[#ff0]", "bg-[#88ff00]", "bg-[#0f0]", "bg-[#00ff88]", "bg-[#00f0f0]",
  "bg-[#0088ff]", "bg-[#00f]", "bg-[#8800ff]", "bg-[#f0f]", "bg-[#ff0088]", "bg-[#eee]", "bg-[#ddd]", "bg-[#ccc]",
  "bg-[#bbb]", "bg-[#aaa]", "bg-[#999]", "bg-[#888]", "bg-[#666]", "bg-[#444]",
];

const nIcon = <T x={2.5} y={11.5} s={12} w={9} c="#0a1">N</T>;
const pillA = <g shapeRendering="auto"><ellipse cx="7" cy="7" rx="5.500" ry="3.200" transform="rotate(45 7 7)" fill="#0a3" stroke={K} strokeWidth=".8" /><circle cx="5.200" cy="4.800" r="2" fill="#f00" /><circle cx="8.500" cy="7.500" r="2" fill="#f00" /></g>;
const pillB = <g shapeRendering="auto"><path d="M2 12L12 2" stroke="#f00" strokeWidth="2.500" /><ellipse cx="7" cy="7" rx="5.500" ry="3" transform="rotate(45 7 7)" fill="#0a3" stroke={K} strokeWidth=".8" /></g>;
const dot = <circle cx="7" cy="7" r="4.500" fill="#fff" stroke={K} />;
const cross = <g><rect x="1" y="1" width="12" height="12" fill="#012" /><rect x="1.500" y="1.500" width="11" height="11" fill="none" stroke="#22a" strokeDasharray="1 1" /><path d="M3 3l8 8M11 3l-8 8" stroke="#ddd" strokeWidth="2.500" /><path d="M3 3l8 8M11 3l-8 8" stroke={K} /></g>;

function Slider({ w, value, fill, track, end }) {
  return (
    <div className={`flex h-[14px] ${w}`}>
      <div className={`flex flex-1 border border-black ${fill} ${end ? "justify-end" : ""}`}>
        <div className={`-my-[2px] h-[16px] w-[10px] shrink-0 border-2 border-black bg-white ${end ? "" : "-ml-[2px]"}`} />
      </div>
      <div className={`flex items-center justify-end border-y border-r border-black bg-[#005a00] text-[12px] leading-none text-white [-webkit-text-stroke:0.3px_white] ${track}`}>{value}</div>
    </div>
  );
}

function ColourRow({ kind, on, children }) {
  return (
    <div className="flex h-[14px] gap-[2px]">
      {kind === "a" ? <Mini on={on}>{nIcon}</Mini> : <Mini on={on}><Eraser /></Mini>}
      <Mini>{kind === "a" ? pillA : pillB}</Mini>
      <Mini>{kind === "a" ? dot : cross}</Mini>
      {children}
    </div>
  );
}

const tagIcon = (t, w = 8) => (
  <g>
    <path d="M10 1h3v3h-3z" fill="#f0f" /><path d="M10 4h3v3h-3z" fill="#e00" /><path d="M10 7h3v3h-3z" fill="#0c0" /><path d="M10 10h3v3h-3z" fill="#0cc" />
    <T x={1.5} y={11} s={11} w={w} c="#ff0" b={400} sw={1.6}>{t}</T>
  </g>
);

function ColourPanel() {
  return (
    <div className="mt-px flex h-[85px] flex-col gap-[2px] border border-[#555] bg-[#999] p-px text-[12px] leading-none">
      <div className="flex h-[14px] gap-[2px]">
        <div className="flex w-[14px] items-center justify-center border border-black bg-[#aaa] text-[10px]">&lt;</div>
        <div className="w-[14px] border border-white bg-black outline outline-white" />
        {swatches.map((s) => <div key={s} className={`w-[14px] border border-black ${s}`} />)}
        <div className="flex w-[14px] items-center justify-center border border-black bg-[#aaa] text-[10px]">&gt;</div>
      </div>
      <div className="flex gap-[2px]">
        <div className="flex flex-col gap-[2px]">
          <div className="h-[30px] w-[30px] border border-black bg-black" />
          <div className="h-[30px] w-[30px] border border-black bg-white" />
        </div>
        <div className="flex flex-col gap-[2px]">
          <ColourRow kind="a" on>
            <Slider w="w-[158px]" value="0" fill="bg-linear-to-r from-black to-[#f00]" track="w-[20px]" />
            <Slider w="w-[159px]" value="0" fill="bg-white" track="w-[20px]" />
          </ColourRow>
          <ColourRow kind="b">
            <Slider w="w-[158px]" value="0" fill="bg-linear-to-r from-black to-[#0f0]" track="w-[20px]" />
            <Slider w="w-[159px]" value="0" fill="bg-white" track="w-[20px]" />
          </ColourRow>
          <ColourRow kind="a">
            <Slider w="w-[158px]" value="0" fill="bg-linear-to-r from-black to-[#00f]" track="w-[20px]" />
            <Slider w="w-[159px]" value="0" fill="bg-linear-to-r/srgb from-black via-[#4400ff] to-white" track="w-[20px]" />
          </ColourRow>
          <ColourRow kind="b" on>
            <Slider w="w-[158px]" value="255" fill="bg-[#aaa]" track="w-[20px]" end />
            <Mini><Dropper k={0.48} /></Mini>
            <Mini><T x={2} y={11} s={11} w={10} b={400}>HSL</T></Mini>
            <Mini>{tagIcon("Bg")}</Mini>
            <Mini>{tagIcon("S", 7)}</Mini>
            <Mini>{tagIcon("Sn")}</Mini>
            <Mini>{tagIcon("All")}</Mini>
            <div className="ml-[48px] flex w-[14px] items-center justify-center border border-black bg-[#aaa] text-[#222]">D</div>
          </ColourRow>
        </div>
      </div>
    </div>
  );
}

function Header({ bg, open, children }) {
  return (
    <div className={`relative flex h-[20px] shrink-0 items-center justify-center border border-[#555] pr-[2px] text-[13px] leading-none ${bg}`}>
      <svg width="12" height="12" viewBox="0 0 12 12" className="absolute left-[4px] top-[2px]">
        {open ? <path d="M.5 1.500h10l-5 9z" fill="#fff" /> : <path d="M1 1.500v9l9-4.500z" fill={K} />}
      </svg>
      {children}
    </div>
  );
}

/* ---------- blend mode strip ---------- */

const t1 = (t, c, w = 10) => <T x={2} y={11} s={10.5} w={w} c={c} sw={1.8} b={400}>{t}</T>;
const t2 = (a, b) => (
  <g>
    <T x={2} y={6.5} s={6.5} w={10} sw={1}>{a}</T>
    <T x={2} y={12} s={6.5} w={10} sw={1}>{b}</T>
  </g>
);
const blends = [
  [t1("S-O", "#eee")], [dot], [cross],
  [<g><circle cx="7" cy="7" r="5.500" fill="#4bd" />{t1("Scr", "#dff")}</g>],
  [t1("O-L")],
  [<g><path d="M1 1h6v6H1z" fill="#f00" /><path d="M7 1h6v6H7z" fill="#ff0" /><path d="M1 7h6v6H1z" fill="#f0f" /><path d="M7 7h6v6H7z" fill="#00f" />{t1("CD")}</g>],
  [<g><path d="M1 1h6v12H1z" fill="#900" /><path d="M7 1h6v12H7z" fill="#037" />{t1("CB")}</g>],
  [t1("H-L")], [t1("S-L")],
  [<g><path d="M1 1h12v12H1z" /><path d="M1 13L13 1v12z" fill="#fff" />{t1("Dif")}</g>],
  [<g><path d="M1 1h12L1 13z" /><path d="M1 13L13 1v12z" fill="#ccc" />{t1("Exd", "#999")}</g>],
  [<g><path d="M1 1h4v12H1z" fill="#f66" /><path d="M5 1h4v12H5z" fill="#7d8" /><path d="M9 1h4v12H9z" fill="#c66" />{t1("Hue")}</g>],
  [<g><path d="M1 1h12v12H1z" fill="#cc4" />{t1("Sat")}</g>],
  [<g><path d="M1 1h4v12H1z" fill="#f00" /><path d="M5 1h4v12H5z" fill="#0b0" /><path d="M9 1h4v12H9z" fill="#00f" />{t1("Col")}</g>],
  [<g><path d="M1 1h12v6H1z" fill="#ddd" /><path d="M1 7h12v6H1z" fill="#333" />{t1("lum")}</g>],
  [t2("Src", "Atop")], [t2("Src", "in")], [t2("Src", "out")], [t2("Dest", "over")], [t2("Dest", "Atop")],
  [t2("Dest", "in")], [t2("Dest", "out")],
  [<T x={2} y={10} s={9.5} w={10} b={400} sw={1.8}>cpy</T>], [t1("xor")],
  [<path d="M2 13C2 6 7 3 13 2M2 9h3M6 5h3" fill="none" stroke="#11f" strokeWidth="1.500" />],
];

const M = { fill: "#e4e4e4", stroke: K, strokeWidth: 1 };
const miniTransport = [
  <g><path d="M1.500 2.500h2v7h-2z" {...M} /><path d="M10 1.500v9L5 6z" {...M} /></g>,
  <path d="M6 1.500v9L1.500 6zM10.500 1.500v9L6 6z" {...M} />,
  <path d="M2.500 2.500h7v7h-7z" {...M} />,
  <path d="M1.500 1v10L11 6z" {...M} />,
  <path d="M1.500 1.500v9L6 6zM6 1.500v9L10.500 6z" {...M} />,
  <g><path d="M8.500 2.500h2v7h-2z" {...M} /><path d="M2 1.500v9L7 6z" {...M} /></g>,
];

function SpritesPanel() {
  return (
    <div className="mt-px flex h-[213px] flex-col gap-[3px] border border-[#555] bg-[#999] p-px">
      {toolRows.map((row, r) => (
        <div key={r} className="flex h-[29px] gap-[3px]">
          {row.map((icon, c) => (
            <Tool key={c} on={r === 3 && (c === 2 || c === 3)} off={(r === 2 && c > 3 && c < 7) || (r === 4 && c > 8)}>{icon}</Tool>
          ))}
          {r === 2 && (
            <div className="flex gap-[2px]">
              <Mini><Eye x={7} y={7} r={6} /></Mini>
              <Mini><Camera k={0.48} /></Mini>
            </div>
          )}
        </div>
      ))}
      <div className="flex h-[30px] gap-[3px] text-[12px] leading-none text-white">
        <Tool>
          <path d="M6 26l21-10" stroke="#555" strokeWidth="3" />
          <path d="M4.500 3.500v22L26 14.500z" fill="#d8d8d8" stroke="#222" />
          <path d="M6 6l16 8" stroke="#fff" strokeWidth="1.500" />
        </Tool>
        <div className="flex w-[317px] flex-col gap-[2px]">
          <div className="flex h-[14px] gap-[2px]">
            <div className="flex w-[158px] border border-black bg-[#999]">
              <div className="m-px h-[10px] w-[135px] bg-black" />
              <div className="flex flex-1 items-center justify-center border-l border-black bg-[#005a00] [-webkit-text-stroke:0.3px_white]">255</div>
            </div>
            <div className="w-[14px] bg-black" />
            <div className="w-[14px] bg-[#777]" />
            {miniTransport.map((icon, i) => (
              <div key={i} className="w-[14px] border border-black bg-[#999]">
                <svg viewBox="0 0 12 12" className="block h-3 w-3">{icon}</svg>
              </div>
            ))}
          </div>
          <div className="flex h-[14px] w-[310px] border border-black bg-[#aaa]">
            <div className="w-[180px] bg-[#00ff00]" />
            <div className="flex-1" />
            <div className="flex w-[19px] items-center justify-center border-l border-black bg-[#005a00] [-webkit-text-stroke:0.3px_white]">75</div>
          </div>
        </div>
        <Tool>
          <T x={2} y={24} s={27} w={17} c="#e4e4e4" sw={2}>UI</T>
          <path d="M24.500 3v24" stroke="#333" />
          <path d="M18 13h5v-3l5 4.500-5 4.500v-3h-5z" fill={GREEN} stroke={K} />
        </Tool>
      </div>
      <div className="-mt-px flex h-[14px] gap-[2px] overflow-visible">
        {blends.map(([icon], i) => <Mini key={i} on={i === 0}>{icon}</Mini>)}
      </div>
    </div>
  );
}

/* ---------- media list ---------- */

const ink = "h-[18px] w-[18px] flex items-center justify-center border";
function SBtn({ off, gap = "", children }) {
  return (
    <div className={`${ink} ${off ? "border-[#999] opacity-60" : "border-black"} ${gap}`}>
      <svg viewBox="0 0 14 14" className="block h-[12px] w-[12px]">{children}</svg>
    </div>
  );
}
const inbox = <g><path d="M1 5l3-2h6l3 2v7l-2 1.500H3L1 12z" fill="#3ac4f4" /><path d="M3 5l2-1h4l2 1v4l-4 2-4-2z" fill="#fff" /><path d="M5.800 1h2.400v4h2L7 9 3.800 5h2z" fill="#e8204a" /></g>;
const nib = <g><path d="M2 12l2-6 4-3 3 3-3 4z" fill="#c8ccd8" stroke="#667" strokeWidth=".7" /><path d="M2 12l4-4" stroke="#446" /><path d="M8 2l2-2 4 4-2 2z" fill="#5a3a6a" /></g>;

function Runner() {
  return (
    <svg width="12" height="12" viewBox="0 0 12 12">
      <circle cx="7.500" cy="2" r="1.500" fill="#f8b030" />
      <path d="M3 4l4-.5L6 7l3 1.500V11M6 7L4 9.500H1" fill="none" stroke="#f08020" strokeWidth="1.700" />
      <path d="M7 4l2 2 2-.5" fill="none" stroke="#f8b030" strokeWidth="1.200" />
    </svg>
  );
}

function SmallTab({ on, children }) {
  return (
    <div className={`flex w-[18px] items-center justify-center rounded-t-[4px] border border-b-0 border-black ${on ? "h-[21px] bg-[#aaa]" : "h-[20px] bg-[#888] pt-px"}`}>{children}</div>
  );
}

function Media() {
  return (
    <div className="flex min-h-0 flex-1 flex-col text-[12px] leading-none text-[#222]">
      <div className="mt-[3px] flex h-[20px] items-end gap-[4px] text-[13px]">
        <div className="mb-[2px] flex h-[17px] w-[103px] items-center justify-center rounded-t-[5px] border border-[#555] bg-[#cca870]">Media</div>
        <div className="mb-px flex h-[19px] w-[105px] items-center justify-center rounded-t-[5px] border-x-2 border-t-2 border-[#555] bg-[#336622] pb-px text-white [-webkit-text-stroke:0.4px_white]">Sprites</div>
        <div className="mb-[2px] flex h-[17px] w-[103px] items-center justify-center rounded-t-[5px] border border-[#555] bg-[#7aaacc]">Extras</div>
      </div>
      <div className="flex h-[20px] items-start gap-[2px]">
        <SmallTab on>S</SmallTab><SmallTab>C</SmallTab><SmallTab>G</SmallTab><SmallTab>L</SmallTab>
        <div className="flex h-[18px] w-[22px] items-center justify-center border border-black">All</div>
        <div className="flex h-[18px] w-[22px] items-center justify-center border border-black">Inv</div>
        <SBtn><circle cx="5.500" cy="5" r="4" fill="#2ab4f8" stroke="#1468b8" /><path d="M8.500 8.500l4.500 4.500" stroke="#2a50c0" strokeWidth="2.500" /></SBtn>
        <SBtn><path d="M5 6.500l2 3.500 2-3.500" fill="none" stroke="#6a94b8" strokeWidth="1.600" /></SBtn>
        <SBtn off><path d="M5 9.500L7 6l2 3.500" fill="none" stroke="#999" strokeWidth="1" /></SBtn>
        <SBtn>{inbox}</SBtn>
        <SBtn off><g opacity=".5">{inbox}</g></SBtn>
        <SBtn off gap="ml-[20px]"><g opacity=".6">{nib}</g></SBtn>
        <SBtn gap="ml-[20px]"><path d="M1 1h11l1 1v11H1z" fill="#44304e" /><path d="M4 1h6v4H4z" fill="#ddd" /><path d="M3 7h8v6H3z" fill="#eee" /><path d="M4 9h6M4 11h6" stroke="#99a" strokeWidth=".8" /></SBtn>
        <SBtn><path d="M6 6h7v7H6z" fill="#0a7ac8" /><path d="M4 4h7v7H4z" fill="#d03030" /><path d="M1 1h8v8H1z" fill="#6c2" /></SBtn>
        <SBtn>{inbox}</SBtn>
      </div>
      <div className="flex h-[217px] flex-col border border-black bg-[#aaa]">
        {[0, 1, 2].map((i) => (
          <div key={i} className="flex h-[15px] items-start overflow-hidden whitespace-nowrap border-b border-black bg-[#1010ff] pt-[3px] leading-[13px] text-[#c4c4d8] [-webkit-text-stroke:0.25px_#c4c4d8]">
            <span className="h-[11px] overflow-hidden">Cutter [256]256 by [256] 256</span>
            <span className="ml-[6px]"><Runner /></span>
            <Palette className="ml-[4px] h-[12px] w-[12px]" />
          </div>
        ))}
      </div>
    </div>
  );
}

export default function App() {
  return (
    <div className="flex h-[723px] w-[1271px] overflow-hidden bg-[#aaa] font-['Liberation_Sans',Arial,sans-serif]">
      <div className="flex w-[869px] shrink-0 flex-col">
        <div className="flex h-[525px] shrink-0 border-b border-r border-black">
          <div className="border-r border-black"><Stage /></div>
        </div>
        <Timeline />
      </div>
      <div className="flex w-[402px] shrink-0 flex-col">
        <div className="flex h-[93px] shrink-0 flex-col bg-black font-['DejaVu_Sans_Mono',monospace] text-[12px] leading-[16px] tracking-[-0.024px]">
          <div className="flex h-[74px] bg-[#465646]">
            <div className="h-[74px] flex-1 overflow-hidden text-[#6cf084] [-webkit-text-stroke:0.25px]">
              <div className="text-white">webGL is flagged as canUseFloats: false</div>
              <div>Wellcome to Paint Groover V3</div>
              <div>Type help or ? to get more info on using the command line</div>
              <div className="flex">
                All loaded and ready to be groovey
                <svg width="14" height="14" viewBox="0 0 14 14" className="ml-[8px] mt-px">
                  <circle cx="7" cy="7" r="6" fill="#f8a838" /><circle cx="4.500" cy="5" r="2" fill="#fff" /><circle cx="9.500" cy="5" r="2" fill="#fff" />
                  <circle cx="4.800" cy="5" r=".9" /><circle cx="9.200" cy="5" r=".9" />
                </svg>
              </div>
            </div>
            <div className="h-[74px] w-[6px] bg-[#0c5a10]"><div className="h-[56px] bg-[#46c41a]" /></div>
          </div>
        </div>
        <div className="mt-[4px] h-px shrink-0 bg-black" />
        <div className="ml-[2px] mt-[2px] flex min-h-0 w-[400px] flex-1 flex-col">
          <Header bg="bg-[#3d5a9a] text-white [-webkit-text-stroke:0.3px_white]" open>Colour<Palette className="ml-px h-[14px] w-[14px]" /></Header>
          <ColourPanel />
          <div className="h-px" />
          <Header bg="bg-[#999] text-[#222]">Paint<svg width="14" height="14" viewBox="0 0 14 14" className="ml-[5px]">{nib}</svg></Header>
          <div className="h-px" />
          <Header bg="bg-[#588a42] text-white [-webkit-text-stroke:0.3px_white]" open>
            Sprites
            <svg width="14" height="14" viewBox="0 0 14 14" className="ml-[2px]">
              <path d="M4 3l8 10" stroke="#8a5a4a" strokeWidth="2.500" /><path d="M1 5l4-4 3 2-5 4z" fill="#777" />
              <path d="M2 12l8-8" stroke="#b0b0b4" strokeWidth="2.500" /><circle cx="11" cy="3.500" r="2" fill="none" stroke="#b0b0b4" strokeWidth="1.500" />
            </svg>
          </Header>
          <SpritesPanel />
          <Media />
        </div>
      </div>
    </div>
  );
}
